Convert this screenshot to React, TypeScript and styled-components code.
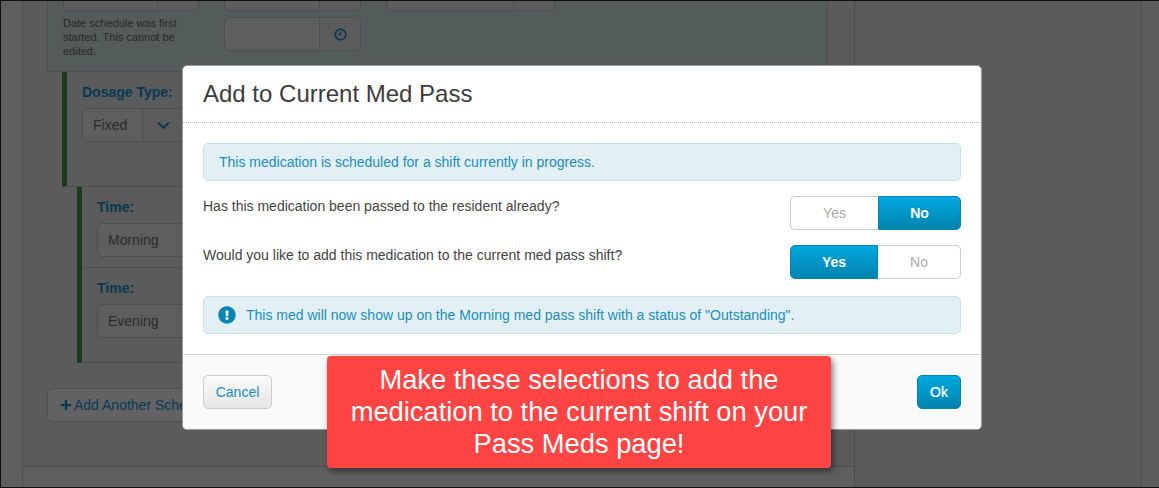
import React from 'react'
import styled, { createGlobalStyle } from 'styled-components'
import { FaExclamationCircle, FaPlus } from 'react-icons/fa'
import { LuChevronDown } from 'react-icons/lu'

const GlobalStyle = createGlobalStyle`
  html, body {
    margin: 0;
    padding: 0;
    background: #5b5b5b;
    font-family: "Liberation Sans", Arial, sans-serif;
    overflow: hidden;
  }
`

function ClockIcon() {
  return (
    <svg width="13" height="13" viewBox="0 0 12 12" fill="none" stroke="#083a52" strokeWidth="1.6">
      <circle cx="6" cy="6" r="4.9" />
      <path d="M6 2.8V6.2H3.6" strokeWidth="1.2" />
    </svg>
  )
}

type ChoiceProps = {
  value: 'Yes' | 'No'
}

function Choice({ value }: ChoiceProps) {
  return (
    <ChoiceGroup>
      <ChoiceButton $active={value === 'Yes'}>Yes</ChoiceButton>
      <ChoiceButton $active={value === 'No'}>No</ChoiceButton>
    </ChoiceGroup>
  )
}

function BackgroundPage() {
  return (
    <Page>
      <Gutter />
      <MainColumn>
        <Content>
          <SchedulePanel>
            <PanelFirstCol>
              <InputGroup $width={136} $height={10} $addon={40} $flatTop />
              <HelpText>Date schedule was first started. This cannot be edited.</HelpText>
            </PanelFirstCol>
            <PanelSecondCol>
              <InputGroup $width={137} $height={10} $addon={40} $flatTop />
              <InputGroup $width={137} $height={34} $addon={40}>
                <span />
                <Addon $width={40}><ClockIcon /></Addon>
              </InputGroup>
            </PanelSecondCol>
            <InputGroup $width={168} $height={10} $addon={40} $flatTop />
          </SchedulePanel>
          <DosageBlock>
            <FieldLabel>Dosage Type:</FieldLabel>
            <InputGroup $width={102} $height={34} $addon={40}>
              <InputValue>Fixed</InputValue>
              <Addon $width={40}><LuChevronDown size={19} color="#083a52" strokeWidth={2.6} /></Addon>
            </InputGroup>
          </DosageBlock>
          <TimesBlock>
            <TimeRow>
              <FieldLabel>Time:</FieldLabel>
              <InputGroup $width={140} $height={34} $addon={0}>
                <InputValue>Morning</InputValue>
              </InputGroup>
            </TimeRow>
            <TimeRow>
              <FieldLabel>Time:</FieldLabel>
              <InputGroup $width={140} $height={34} $addon={0}>
                <InputValue>Evening</InputValue>
              </InputGroup>
            </TimeRow>
          </TimesBlock>
          <AddButton>
            <FaPlus size={12} color="#083a52" />
            Add Another Schedule
          </AddButton>
        </Content>
        <Divider />
      </MainColumn>
      <SideColumn />
      <EdgeColumn />
    </Page>
  )
}

export default function App() {
  return (
    <>
      <GlobalStyle />
      <Frame>
        <BackgroundPage />
        <Modal>
          <ModalHeader>
            <ModalTitle>Add to Current Med Pass</ModalTitle>
          </ModalHeader>
          <ModalBody>
            <Alert>This medication is scheduled for a shift currently in progress.</Alert>
            <QuestionRow>
              <Question>Has this medication been passed to the resident already?</Question>
              <Choice value="No" />
            </QuestionRow>
            <QuestionRow>
              <Question>Would you like to add this medication to the current med pass shift?</Question>
              <Choice value="Yes" />
            </QuestionRow>
            <NoticeAlert>
              <NoticeIcon size={18} color="#0a85b0" />
              This med will now show up on the Morning med pass shift with a status of "Outstanding".
            </NoticeAlert>
          </ModalBody>
          <ModalFooter>
            <CancelButton>Cancel</CancelButton>
            <OkButton>Ok</OkButton>
          </ModalFooter>
        </Modal>
        <Callout>Make these selections to add the medication to the current shift on your Pass Meds page!</Callout>
      </Frame>
    </>
  )
}

const Frame = styled.div`
  position: relative;
  width: 1159px;
  height: 488px;
  box-sizing: border-box;
  overflow: hidden;
  background: #5b5b5b;
  border-top: 1px solid #111;
  border-left: 1px solid #111;
  border-bottom: 1px solid #111;
`

const Page = styled.div`
  display: flex;
  height: 100%;
  color: #2c2c2c;
`

const Gutter = styled.div`
  width: 21px;
  flex: none;
  background: #5f5f5f;
`

const MainColumn = styled.div`
  width: 833px;
  flex: none;
  box-sizing: border-box;
  border-left: 1px solid #4f4f4f;
  border-right: 1px solid #4a4a4a;
  display: flex;
  flex-direction: column;
`

const Content = styled.div`
  height: 465px;
  flex: none;
  box-sizing: border-box;
  padding-left: 24px;
`

const Divider = styled.div`
  border-top: 1px solid #4a4a4a;
  flex: 1;
  background: #5f5f5f;
`

const SideColumn = styled.div`
  width: 287px;
  flex: none;
  box-sizing: border-box;
  border-right: 1px solid #4f4f4f;
`

const EdgeColumn = styled.div`
  flex: 1;
  background: #5d5d5d;
`

const SchedulePanel = styled.div`
  display: flex;
  height: 71px;
  width: 781px;
  box-sizing: border-box;
  padding-left: 15px;
  gap: 25px;
  background: #535b5b;
  border-left: 1px solid #4a4f4f;
  border-right: 1px solid #4a4f4f;
  border-bottom: 1px solid #4a4f4f;
`

const PanelFirstCol = styled.div`
  width: 136px;
  flex: none;
`

const PanelSecondCol = styled.div`
  width: 138px;
  flex: none;
  display: flex;
  flex-direction: column;
  gap: 6px;
`

const InputGroup = styled.div<{ $width: number; $height: number; $addon: number; $flatTop?: boolean }>`
  width: ${p => p.$width}px;
  height: ${p => p.$height}px;
  box-sizing: border-box;
  display: flex;
  justify-content: space-between;
  border: 1px solid #4e4e4e;
  border-top: ${p => (p.$flatTop ? 'none' : '1px solid #4e4e4e')};
  border-radius: ${p => (p.$flatTop ? '0 0 5px 5px' : '5px')};
  background: ${p =>
    p.$addon && p.$flatTop
      ? `linear-gradient(to left, #5c5c5c ${p.$addon}px, #4e4e4e ${p.$addon}px, #4e4e4e ${p.$addon + 1}px, #5e5e5e ${p.$addon + 1}px)`
      : '#5e5e5e'};
`

const InputValue = styled.span`
  font-size: 14px;
  line-height: 32px;
  padding-left: 10px;
  color: #2c2c2c;
`

const Addon = styled.span<{ $width: number }>`
  width: ${p => p.$width}px;
  display: flex;
  align-items: center;
  justify-content: center;
  border-left: 1px solid #4e4e4e;
  background: #5c5c5c;
  border-radius: 0 4px 4px 0;
`

const HelpText = styled.p`
  margin: 5px 0 0;
  font-size: 11px;
  line-height: 14px;
  color: #2a2a2a;
`

const FieldLabel = styled.div`
  font-size: 14px;
  font-weight: bold;
  line-height: 16px;
  color: #083a52;
  margin-bottom: 8px;
`

const DosageBlock = styled.div`
  margin-left: 15px;
  width: 766px;
  height: 115px;
  box-sizing: border-box;
  padding: 12px 0 0 15px;
  border-left: 5px solid #1a3a1e;
  border-bottom: 1px solid #4e4e4e;
`

const TimesBlock = styled.div`
  margin-left: 30px;
  width: 751px;
  border-left: 5px solid #1a3a1e;
  border-bottom: 1px solid #4e4e4e;
`

const TimeRow = styled.div`
  height: 80px;
  box-sizing: border-box;
  padding: 12px 0 0 15px;
  & + & {
    height: 95px;
    border-top: 1px solid #4e4e4e;
  }
`

const AddButton = styled.div`
  margin-top: 25px;
  width: 170px;
  height: 34px;
  box-sizing: border-box;
  display: flex;
  align-items: center;
  gap: 2px;
  padding-left: 12px;
  font-size: 14px;
  color: #083a52;
  background: #626262;
  border: 1px solid #4e4e4e;
  border-radius: 5px;
  white-space: nowrap;
`

const Modal = styled.div`
  position: absolute;
  left: 181px;
  top: 64px;
  width: 800px;
  height: 365px;
  box-sizing: border-box;
  display: flex;
  flex-direction: column;
  background: #fff;
  border: 1px solid #999;
  border-radius: 5px;
  overflow: hidden;
  color: #444;
`

const ModalHeader = styled.div`
  height: 57px;
  flex: none;
  box-sizing: border-box;
  padding-left: 20px;
  border-bottom: 1px dotted #bbb;
  display: flex;
  align-items: center;
`

const ModalTitle = styled.h4`
  margin: 0;
  font-size: 24px;
  font-weight: normal;
  color: #3c3c3c;
`

const ModalBody = styled.div`
  flex: 1;
  box-sizing: border-box;
  padding: 20px 20px 0;
`

const Alert = styled.div`
  height: 38px;
  box-sizing: border-box;
  display: flex;
  align-items: center;
  padding-left: 15px;
  font-size: 14px;
  color: #1b8fb8;
  background: #e2f0f5;
  border: 1px solid #c8e1ea;
  border-radius: 5px;
`

const NoticeAlert = styled(Alert)`
  gap: 10px;
  margin-top: 17px;
`

const NoticeIcon = styled(FaExclamationCircle)`
  margin-left: -1px;
`

const QuestionRow = styled.div`
  display: flex;
  justify-content: space-between;
  align-items: flex-start;
  margin-top: 15px;
`

const Question = styled.div`
  font-size: 14px;
  line-height: 20px;
  color: #444;
`

const ChoiceGroup = styled.div`
  display: flex;
  width: 171px;
  height: 34px;
`

const ChoiceButton = styled.div<{ $active: boolean }>`
  box-sizing: border-box;
  display: flex;
  align-items: center;
  justify-content: center;
  font-size: 14px;
  font-weight: ${p => (p.$active ? 'bold' : 'normal')};
  color: ${p => (p.$active ? '#fff' : '#aaa')};
  background: ${p => (p.$active ? 'linear-gradient(#00a9e0, #0082ad)' : '#fff')};
  border: 1px solid ${p => (p.$active ? '#0086b3' : '#ccc')};
  &:first-child {
    width: 88px;
    border-radius: 5px 0 0 5px;
    ${p => (p.$active ? '' : 'border-right: none;')}
  }
  &:last-child {
    width: 83px;
    border-radius: 0 5px 5px 0;
    ${p => (p.$active ? '' : 'border-left: none;')}
  }
`

const ModalFooter = styled.div`
  height: 75px;
  flex: none;
  box-sizing: border-box;
  padding: 20px 20px 0;
  display: flex;
  justify-content: space-between;
  align-items: flex-start;
  background: #fafafa;
  border-top: 1px solid #d5d5d5;
`

const CancelButton = styled.div`
  width: 69px;
  height: 34px;
  box-sizing: border-box;
  display: flex;
  align-items: center;
  justify-content: center;
  font-size: 14px;
  color: #1b8fb8;
  background: linear-gradient(#fafafa, #e6e6e6);
  border: 1px solid #ccc;
  border-radius: 5px;
`

const OkButton = styled.div`
  width: 44px;
  height: 34px;
  box-sizing: border-box;
  display: flex;
  align-items: center;
  justify-content: center;
  font-size: 14px;
  color: #fff;
  text-shadow: 0 0 1px rgba(255, 255, 255, 0.6);
  background: linear-gradient(#00a9e0, #0082ad);
  border: 1px solid #0086b3;
  border-radius: 5px;
`

const Callout = styled.div`
  position: absolute;
  left: 326px;
  top: 355px;
  width: 504px;
  height: 112px;
  box-sizing: border-box;
  padding: 8px 20px 0;
  text-align: center;
  font-size: 27.3px;
  line-height: 32px;
  color: #fff;
  background: #ff4444;
  border-radius: 4px;
  box-shadow: 2px 3px 6px rgba(0, 0, 0, 0.5);
`
